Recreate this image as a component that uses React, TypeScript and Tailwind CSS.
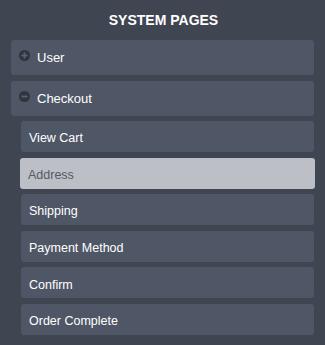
import { useState } from "react"

const subPages = ["View Cart", "Address", "Shipping", "Payment Method", "Confirm", "Order Complete"]

function SignIcon({ open }: { open: boolean }) {
  return (
    <svg width="11" height="11" viewBox="0 0 11 11" className="shrink-0">
      <circle cx="5.5" cy="5.5" r="5.5" fill="#2f343d" />
      <rect x="2.5" y="4.6" width="6" height="1.8" fill="#5a6170" />
      {!open && <rect x="4.6" y="2.5" width="1.8" height="6" fill="#5a6170" />}
    </svg>
  )
}

export default function App() {
  const [active] = useState("Address")

  return (
    <div
      className="w-[325px] h-[345px] bg-[#3f4551] pt-[12px] overflow-hidden"
      style={{ fontFamily: '"Liberation Sans", Arial, sans-serif' }}
    >
      <h2 className="text-center text-[14px] leading-[14px] font-bold text-white pt-[1px] pl-[2px]">SYSTEM PAGES</h2>

      <div className="mt-[13px] ml-[11px] w-[303px] flex flex-col gap-[6px]">
        <div className="h-[35px] rounded-[3px] bg-[#4f5766] flex items-start pl-[8px] pt-[10px] gap-[7px] text-[13px] text-white">
          <SignIcon open={false} />
          <span className="leading-[15px] -mt-[0.5px]">User</span>
        </div>
        <div className="h-[35px] rounded-[3px] bg-[#4f5766] flex items-start pl-[8px] pt-[10px] gap-[7px] text-[13px] text-white">
          <SignIcon open={true} />
          <span className="leading-[15px] -mt-[0.5px]">Checkout</span>
        </div>
      </div>

      <div className="mt-[5px] ml-[21px] w-[293px] flex flex-col gap-[5.6px]">
        {subPages.map((page) =>
          page === active ? (
            <div
              key={page}
              className="h-[31px] -mx-px rounded-[3px] bg-[#bcbfc6] flex items-center pl-[8px] pt-[4px] text-[12.5px] text-[#555a63]"
            >
              {page}
            </div>
          ) : (
            <div
              key={page}
              className="h-[31px] rounded-[3px] bg-[#4f5766] flex items-center pl-[8px] pt-[4px] text-[12.5px] text-white"
            >
              {page}
            </div>
          )
        )}
      </div>
    </div>
  )
}
